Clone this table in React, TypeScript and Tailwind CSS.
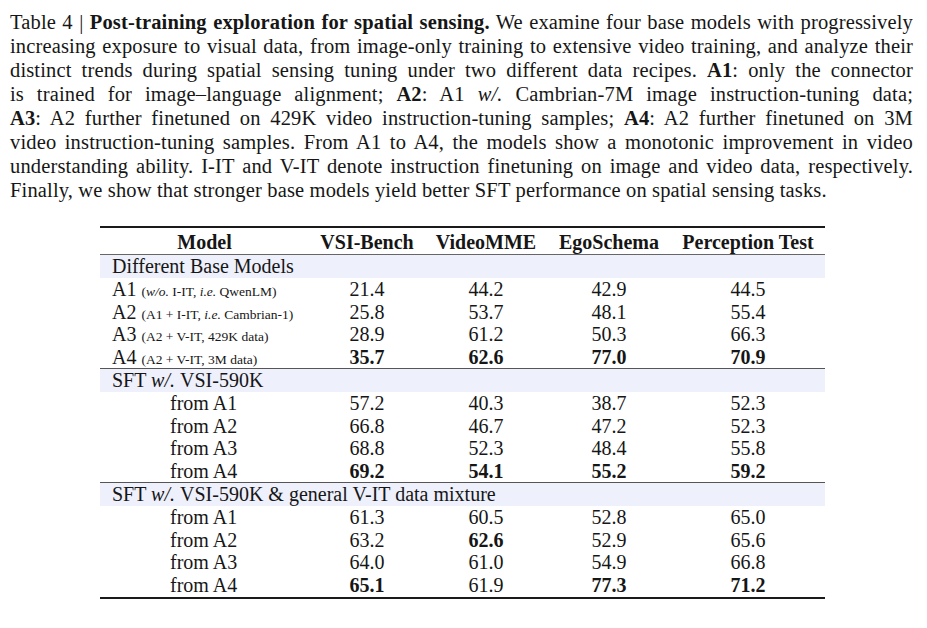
import React from "react";

type Row = {
  label: React.ReactNode;
  indent?: boolean;
  vals: string[];
  bold?: boolean[];
};

const serif = { fontFamily: '"Liberation Serif", "DejaVu Serif", serif' };

const Small = ({ children }: { children: React.ReactNode }) => (
  <span className="text-[13.5px]">{children}</span>
);

const baseRows: Row[] = [
  {
    label: (
      <>
        A1{" "}
        <Small>
          (<i>w/o.</i> I-IT, <i>i.e.</i> QwenLM)
        </Small>
      </>
    ),
    vals: ["21.4", "44.2", "42.9", "44.5"],
  },
  {
    label: (
      <>
        A2{" "}
        <Small>
          (A1 + I-IT, <i>i.e.</i> Cambrian-1)
        </Small>
      </>
    ),
    vals: ["25.8", "53.7", "48.1", "55.4"],
  },
  {
    label: (
      <>
        A3 <Small>(A2 + V-IT, 429K data)</Small>
      </>
    ),
    vals: ["28.9", "61.2", "50.3", "66.3"],
  },
  {
    label: (
      <>
        A4 <Small>(A2 + V-IT, 3M data)</Small>
      </>
    ),
    vals: ["35.7", "62.6", "77.0", "70.9"],
    bold: [true, true, true, true],
  },
];

const sftRows: Row[] = [
  { label: "from A1", indent: true, vals: ["57.2", "40.3", "38.7", "52.3"] },
  { label: "from A2", indent: true, vals: ["66.8", "46.7", "47.2", "52.3"] },
  { label: "from A3", indent: true, vals: ["68.8", "52.3", "48.4", "55.8"] },
  {
    label: "from A4",
    indent: true,
    vals: ["69.2", "54.1", "55.2", "59.2"],
    bold: [true, true, true, true],
  },
];

const mixRows: Row[] = [
  { label: "from A1", indent: true, vals: ["61.3", "60.5", "52.8", "65.0"] },
  {
    label: "from A2",
    indent: true,
    vals: ["63.2", "62.6", "52.9", "65.6"],
    bold: [false, true, false, false],
  },
  { label: "from A3", indent: true, vals: ["64.0", "61.0", "54.9", "66.8"] },
  {
    label: "from A4",
    indent: true,
    vals: ["65.1", "61.9", "77.3", "71.2"],
    bold: [true, false, true, true],
  },
];

const cols = "grid grid-cols-[209px_116px_122px_124px_154px]";

function DataRow({ row }: { row: Row }) {
  return (
    <div className={`${cols} h-[22.5px] leading-[22.5px]`}>
      <div className={`whitespace-nowrap ${row.indent ? "pl-[70px]" : "pl-[12px]"}`}>{row.label}</div>
      {row.vals.map((v, i) => (
        <div key={i} className={`text-center ${row.bold?.[i] ? "font-bold" : ""}`}>
          {v}
        </div>
      ))}
    </div>
  );
}

function GroupHead({ children }: { children: React.ReactNode }) {
  return (
    <div className="h-[23px] leading-[23px] pl-[12px] bg-[#eef0fb] whitespace-nowrap">{children}</div>
  );
}

const lines: React.ReactNode[] = [
  <>
    Table 4 | <b>Post-training exploration for spatial sensing.</b> We examine four base models with progressively
  </>,
  <>increasing exposure to visual data, from image-only training to extensive video training, and analyze their</>,
  <>
    distinct trends during spatial sensing tuning under two different data recipes. <b>A1</b>: only the connector
  </>,
  <>
    is trained for image–language alignment; <b>A2</b>: A1 <i>w/.</i> Cambrian-7M image instruction-tuning data;
  </>,
  <>
    <b>A3</b>: A2 further finetuned on 429K video instruction-tuning samples; <b>A4</b>: A2 further finetuned on 3M
  </>,
  <>video instruction-tuning samples. From A1 to A4, the models show a monotonic improvement in video</>,
  <>understanding ability. I-IT and V-IT denote instruction finetuning on image and video data, respectively.</>,
];

export default function App() {
  return (
    <div className="w-[927px] h-[628px] bg-white text-[#161616] overflow-hidden" style={serif}>
      {/* Caption */}
      <div className="pt-[10px] pl-[10px] w-[913px] text-[20.5px] leading-[24px] tracking-[0.15px]">
        {lines.map((l, i) => (
          <div key={i} className="whitespace-nowrap text-justify [text-align-last:justify]">
            {l}
          </div>
        ))}
        <div className="whitespace-nowrap">
          Finally, we show that stronger base models yield better SFT performance on spatial sensing tasks.
        </div>
      </div>

      {/* Table */}
      <div className="ml-[100px] mt-[24px] w-[725px] text-[20px]">
        <div className="h-[2px] bg-[#1a1a1a]" />
        <div className={`${cols} h-[26px] leading-[28px] font-bold`}>
          <div className="text-center">Model</div>
          <div className="text-center">VSI-Bench</div>
          <div className="text-center">VideoMME</div>
          <div className="text-center">EgoSchema</div>
          <div className="text-center">Perception Test</div>
        </div>
        <div className="h-px bg-[#666]" />
        <GroupHead>Different Base Models</GroupHead>
        {baseRows.map((r, i) => (
          <DataRow key={i} row={r} />
        ))}
        <div className="h-px bg-[#555]" />
        <GroupHead>
          SFT <i>w/.</i>&nbsp;VSI-590K
        </GroupHead>
        {sftRows.map((r, i) => (
          <DataRow key={i} row={r} />
        ))}
        <div className="h-px bg-[#555]" />
        <GroupHead>
          SFT <i>w/.</i>&nbsp;VSI-590K &amp; general V-IT data mixture
        </GroupHead>
        {mixRows.map((r, i) => (
          <DataRow key={i} row={r} />
        ))}
        <div className="mt-[1px] h-[2px] bg-[#1a1a1a]" />
      </div>
    </div>
  );
}
